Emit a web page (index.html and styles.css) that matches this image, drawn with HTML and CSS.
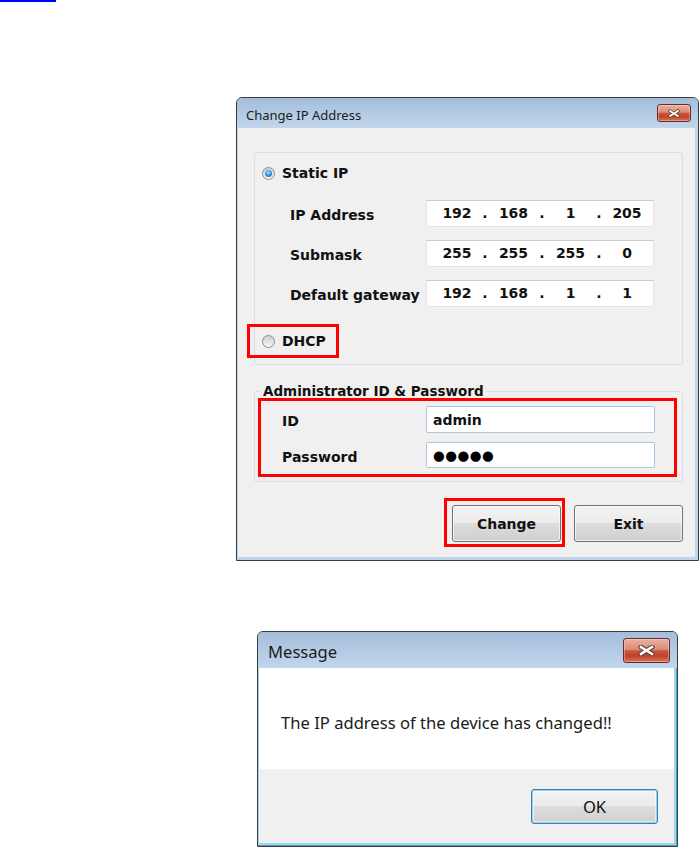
FILE: index.html
```html
<!DOCTYPE html>
<html>
<head>
<meta charset="utf-8">
<link rel="stylesheet" href="styles.css">
</head>
<body>
<div class="link-line"></div>

<div class="win win-ip">
  <div class="titlebar">
    <span class="title">Change IP Address</span>
    <span class="close close-sm">
      <svg width="12" height="9" viewBox="0 0 17 11"><path class="xo" d="M3 2 L14 9 M14 2 L3 9"/><path class="xi" d="M3 2 L14 9 M14 2 L3 9"/></svg>
    </span>
  </div>
  <div class="frame">
    <div class="client">
      <div class="group group-ip">
        <div class="radio-row static">
          <span class="radio on"></span><span class="lbl">Static IP</span>
        </div>
        <div class="field-row first">
          <span class="flabel">IP Address</span>
          <div class="ipbox"><span>192</span><span>.</span><span>168</span><span>.</span><span>1</span><span>.</span><span>205</span></div>
        </div>
        <div class="field-row">
          <span class="flabel">Submask</span>
          <div class="ipbox"><span>255</span><span>.</span><span>255</span><span>.</span><span>255</span><span>.</span><span>0</span></div>
        </div>
        <div class="field-row">
          <span class="flabel">Default gateway</span>
          <div class="ipbox"><span>192</span><span>.</span><span>168</span><span>.</span><span>1</span><span>.</span><span>1</span></div>
        </div>
        <div class="radio-row dhcp mark">
          <span class="radio"></span><span class="lbl">DHCP</span>
        </div>
      </div>

      <fieldset class="group group-admin">
        <legend>Administrator ID &amp; Password</legend>
        <div class="admin-box mark">
          <div class="cred-row">
            <span class="clabel">ID</span>
            <div class="cred-input">admin</div>
          </div>
          <div class="cred-row pw">
            <span class="clabel">Password</span>
            <div class="cred-input dots">●●●●●</div>
          </div>
        </div>
      </fieldset>

      <div class="buttons">
        <span class="btn-mark mark"><span class="btn">Change</span></span>
        <span class="btn exit">Exit</span>
      </div>
    </div>
  </div>
</div>

<div class="win win-msg">
  <div class="titlebar">
    <span class="title">Message</span>
    <span class="close close-lg">
      <svg width="17" height="11" viewBox="0 0 17 11"><path class="xo" d="M3 2 L14 9 M14 2 L3 9"/><path class="xi" d="M3 2 L14 9 M14 2 L3 9"/></svg>
    </span>
  </div>
  <div class="frame">
    <div class="client">
      <div class="msg-body">The IP address of the device has changed!!</div>
      <div class="msg-foot"><span class="ok">OK</span></div>
    </div>
  </div>
</div>
</body>
</html>
```

FILE: styles.css
```css
* { box-sizing: border-box; }
html, body { margin: 0; padding: 0; background: #fff; }
body {
  width: 700px;
  height: 848px;
  overflow: hidden;
  font-family: "DejaVu Sans", sans-serif;
  color: #000;
}

.link-line { width: 56px; height: 2px; background: #0000ff; }

/* ---------- window chrome ---------- */
.win {
  border: 1px solid #3b3b3b;
  border-radius: 6px 6px 0 0;
  background: #bed4eb;
  display: flex;
  flex-direction: column;
}
.titlebar {
  display: flex;
  justify-content: space-between;
  align-items: flex-start;
  border-radius: 5px 5px 0 0;
  background: linear-gradient(to bottom, #a3bddb 0%, #b3cae3 50%, #c2d6ec 100%);
}
.title {
  font-family: "Noto Sans", sans-serif;
  color: #1b1b1b;
}
.frame {
  padding: 0 3px 3px 1px;
}
.client { background: #f0f0f0; }

.close {
  display: flex;
  align-items: center;
  justify-content: center;
  border: 1px solid #6b2a22;
  border-radius: 3px;
  background: linear-gradient(to bottom, #eab0a2 0%, #dc8b78 45%, #c8553c 52%, #c24329 75%, #d47a62 100%);
  box-shadow: inset 0 0 0 1px rgba(255, 255, 255, 0.3);
}
.close svg { display: block; }
.xo { stroke: #5a3a35; stroke-width: 4.6; fill: none; stroke-linecap: square; }
.xi { stroke: #ffffff; stroke-width: 2.6; fill: none; stroke-linecap: square; }

/* ---------- Change IP window ---------- */
.win-ip { width: 463px; margin: 95px 0 0 236px; }
.win-ip .titlebar { height: 30px; padding: 0 7px 0 9px; }
.win-ip .title { font-size: 13px; line-height: 18px; margin-top: 8px; }
.close-sm { width: 34px; height: 18px; margin-top: 6px; }

.win-ip .client {
  height: 429px;
  padding: 24px 12px 0 16px;
}

.group {
  border: 1px solid #d5dfe5;
  border-radius: 3px;
}
.group-ip { height: 213px; width: 429px; }

.lbl, .flabel, .clabel, .ipbox, .cred-input, .btn, legend {
  font-family: "DejaVu Sans", sans-serif;
  font-weight: bold;
  font-size: 14px;
  color: #111;
}

.radio-row {
  display: flex;
  align-items: center;
  gap: 7px;
}
.radio-row.static { margin-top: 8px; height: 24px; padding-left: 7px; }
.radio {
  width: 13px;
  height: 13px;
  flex: none;
  border-radius: 50%;
  border: 1px solid #8c8c8c;
  background: linear-gradient(to bottom, #cfcfcf, #f7f7f7);
  display: flex;
  align-items: center;
  justify-content: center;
}
.radio.on::after {
  content: "";
  width: 7px;
  height: 7px;
  border-radius: 50%;
  background: radial-gradient(circle at 45% 35%, #a6e3ff 0%, #3f9be0 45%, #175a9a 100%);
}

.mark { border: 3px solid #ff0000; }
.radio-row.dhcp {
  margin: 17px 0 0 -8px;
  width: 92px;
  height: 34px;
  padding-left: 12px;
}

.field-row {
  display: flex;
  align-items: center;
  height: 27px;
  margin-top: 13px;
  padding-left: 35px;
}
.field-row.first { margin-top: 15px; }
.flabel { width: 136px; flex: none; padding-top: 2px; }
.ipbox {
  width: 228px;
  height: 27px;
  background: #fff;
  border: 1px solid #e4e4e4;
  border-top-color: #cdcdcd;
  display: grid;
  grid-template-columns: 40px 16px 41px 16px 41px 16px 40px;
  padding-left: 10px;
  align-items: center;
  text-align: center;
  line-height: 25px;
}

/* admin group */
.group-admin {
  margin: 18px 0 0 0;
  width: 429px;
  padding: 0 5px 4px 3px;
  min-inline-size: 0;
}
.group-admin legend {
  font-size: 13.5px;
  line-height: 16px;
  padding: 0 3px;
  margin-left: 2px;
}
.admin-box {
  margin-top: -1px;
  height: 79px;
}
.cred-row {
  display: flex;
  align-items: center;
  height: 27px;
  margin-top: 5px;
  padding-left: 21px;
}
.cred-row.pw { margin-top: 9px; height: 26px; }
.clabel { width: 144px; flex: none; padding-top: 3px; }
.cred-input {
  width: 229px;
  height: 100%;
  background: #fff;
  border: 1px solid #abc6e0;
  border-radius: 2px;
  padding-left: 6px;
  display: flex;
  align-items: center;
}
.cred-input.dots {
  font-size: 13.5px;
  letter-spacing: 0.5px;
  color: #000;
}

.buttons {
  display: flex;
  justify-content: flex-end;
  align-items: flex-start;
  gap: 9px;
  margin-top: 16px;
}
.btn-mark { display: flex; padding: 4px 1px 2px 5px; }
.btn {
  width: 109px;
  height: 37px;
  display: flex;
  align-items: center;
  justify-content: center;
  border: 1px solid #707070;
  border-radius: 3px;
  background: linear-gradient(to bottom, #f3f3f3 0%, #ebebeb 49%, #dddddd 50%, #cfcfcf 100%);
  box-shadow: inset 0 0 0 1px rgba(255, 255, 255, 0.7);
}
.btn.exit { margin-top: 7px; }

/* ---------- Message window ---------- */
.win-msg {
  width: 421px;
  margin: 70px 0 0 257px;
  background: #a3d3ec;
}
.win-msg .titlebar { height: 36px; padding: 0 7px 0 10px; }
.win-msg .title { font-size: 16.6px; line-height: 22px; margin-top: 9px; }
.close-lg { width: 47px; height: 25px; margin-top: 6px; }
.win-msg .frame { padding: 0 3px 3px 1px; box-shadow: inset -1px -1px 0 #3fa9d6; }
.win-msg .client { height: 175px; }
.msg-body {
  height: 101px;
  background: #fff;
  padding: 44px 0 0 22px;
  font-family: "Noto Sans", sans-serif;
  font-size: 16.6px;
  line-height: 22px;
  color: #1a1a1a;
}
.msg-foot {
  height: 74px;
  display: flex;
  justify-content: flex-end;
  align-items: flex-start;
  padding: 20px 16px 0 0;
}
.ok {
  width: 127px;
  height: 35px;
  display: flex;
  align-items: center;
  justify-content: center;
  font-family: "Noto Sans", sans-serif;
  font-size: 16.6px;
  color: #111;
  border: 1px solid #3c7fb1;
  border-radius: 3px;
  background: linear-gradient(to bottom, #f2f2f2 0%, #ebebeb 49%, #dddddd 50%, #cfcfcf 100%);
  box-shadow: inset 0 0 0 1px #8fd3f4, inset 0 0 0 2px rgba(255, 255, 255, 0.5);
}
```
